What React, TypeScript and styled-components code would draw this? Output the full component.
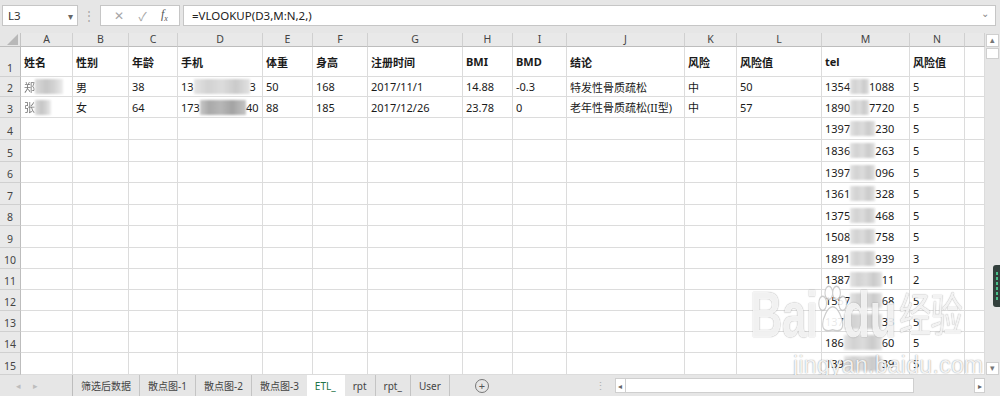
import React from "react";
import styled, { createGlobalStyle } from "styled-components";

const GlobalStyle = createGlobalStyle`
  html, body {
    margin: 0;
    padding: 0;
  }
  body {
    width: 1000px;
    height: 396px;
    overflow: hidden;
    background: #e6e6e6;
    font-family: "Noto Sans", "Noto Sans CJK SC", sans-serif;
    color: #1a1a1a;
  }
`;

const COLS = ["A", "B", "C", "D", "E", "F", "G", "H", "I", "J", "K", "L", "M", "N", ""];
const COL_WIDTHS = [52, 56, 49, 85, 50, 55, 95, 50, 54, 118, 52, 85, 88, 55];
const ROW_HEIGHTS = [30, 20, 21, 22, 22, 21, 22, 21, 22, 21, 21, 21, 21, 21, 22];

const TELS: [string, number, string][] = [
  ["1354", 3, "1088"],
  ["1890", 3, "7720"],
  ["1397", 4, "230"],
  ["1836", 4, "263"],
  ["1397", 4, "096"],
  ["1361", 4, "328"],
  ["1375", 4, "468"],
  ["1508", 4, "758"],
  ["1891", 4, "939"],
  ["1387", 5, "11"],
  ["1557", 5, "68"],
  ["137", 6, "33"],
  ["186", 6, "60"],
  ["139", 6, "39"],
];
const RISK = ["5", "5", "5", "5", "5", "5", "5", "5", "3", "2", "5", "5", "5", "5"];

const TABS = ["筛选后数据", "散点图-1", "散点图-2", "散点图-3", "ETL_", "rpt", "rpt_", "User"];

export default function App() {
  const header = ["姓名", "性别", "年龄", "手机", "体重", "身高", "注册时间", "BMI", "BMD", "结论", "风险", "风险值", "tel", "风险值"];

  const rows: React.ReactNode[][] = [];
  rows.push(header);
  rows.push([
    <>
      <Faded>郑</Faded>
      <Mosaic $w={28} />
    </>,
    "男",
    "38",
    <>
      13
      <Mosaic $w={56} $light />3
    </>,
    "50",
    "168",
    "2017/11/1",
    "14.88",
    "-0.3",
    "特发性骨质疏松",
    "中",
    "50",
  ]);
  rows.push([
    <>
      <Faded>张</Faded>
      <Mosaic $w={16} />
    </>,
    "女",
    "64",
    <>
      173
      <Mosaic $w={46} $dark />
      40
    </>,
    "88",
    "185",
    "2017/12/26",
    "23.78",
    "0",
    "老年性骨质疏松(II型)",
    "中",
    "57",
  ]);
  for (let i = 3; i < 15; i++) rows.push([]);
  TELS.forEach(([pre, hidden, post], i) => {
    const r = rows[i + 1];
    while (r.length < 12) r.push("");
    r[12] = (
      <>
        {pre}
        <Mosaic $w={hidden * 6.3} $light />
        {post}
      </>
    );
    r[13] = RISK[i];
  });

  return (
    <>
      <GlobalStyle />
      <Page>
        <FormulaBar>
          <NameBox>
            <span>L3</span>
            <Caret>▾</Caret>
          </NameBox>
          <Grip>⋮</Grip>
          <ActionBox>
            <Action>✕</Action>
            <Action>✓</Action>
            <Fx>
              f<sub>x</sub>
            </Fx>
          </ActionBox>
          <FormulaInput>
            <span>=VLOOKUP(D3,M:N,2,)</span>
            <Chevron>⌄</Chevron>
          </FormulaInput>
        </FormulaBar>

        <SheetArea>
          <Grid>
            <Corner>
              <svg width="11" height="11" viewBox="0 0 11 11">
                <path d="M11 0 L11 11 L0 11 Z" fill="#b8b8b8" />
              </svg>
            </Corner>
            {COLS.map((c, i) => (
              <ColHead key={i}>{c}</ColHead>
            ))}
            {ROW_HEIGHTS.map((_, r) => (
              <React.Fragment key={r}>
                <RowHead>{r + 1}</RowHead>
                {COLS.map((_, c) => (
                  <Cell key={c} $bold={r === 0}>
                    {rows[r][c] ?? ""}
                  </Cell>
                ))}
              </React.Fragment>
            ))}
          </Grid>
          <VScroll>
            <ScrollBtn>▴</ScrollBtn>
            <VThumb />
            <VTrack />
            <ScrollBtn>▾</ScrollBtn>
          </VScroll>
          <SideWidget>
            <i />
            <i />
            <i />
            <i />
            <i />
            <i />
          </SideWidget>
          <Watermark>
            <WmBig>
              Bai
              <Paw viewBox="0 0 40 44">
                <g fill="#ffffff" stroke="#c8c8c8" strokeWidth="1.4">
                  <ellipse cx="8" cy="16" rx="5" ry="6.5" />
                  <ellipse cx="16" cy="6.5" rx="5" ry="6" />
                  <ellipse cx="26" cy="6.5" rx="5" ry="6" />
                  <ellipse cx="34" cy="16" rx="5" ry="6.5" />
                  <path d="M21 19 C14 19 8 30 8 35 C8 41 14 42 21 40 C28 42 34 41 34 35 C34 30 28 19 21 19 Z" />
                </g>
              </Paw>
              du
              <WmCjk>经验</WmCjk>
            </WmBig>
            <WmUrl>jingyan.baidu.com</WmUrl>
          </Watermark>
        </SheetArea>

        <TabBar>
          <TabNav>
            <NavArrow>◂</NavArrow>
            <NavArrow>▸</NavArrow>
          </TabNav>
          {TABS.map((t) => (
            <Tab key={t} $active={t === "ETL_"}>
              {t}
            </Tab>
          ))}
          <AddSheet>+</AddSheet>
          <TabGrip>⋮</TabGrip>
          <HScroll>
            <HBtn>◂</HBtn>
            <HThumb />
            <HTrack />
            <HBtn>▸</HBtn>
          </HScroll>
        </TabBar>
      </Page>
    </>
  );
}

const Page = styled.div`
  width: 1000px;
  height: 396px;
  display: flex;
  flex-direction: column;
  background: #e6e6e6;
  overflow: hidden;
`;

const FormulaBar = styled.div`
  height: 33px;
  display: flex;
  align-items: flex-start;
  padding: 5px 4px 0 2px;
  box-sizing: border-box;
  flex-shrink: 0;
`;

const BoxBase = styled.div`
  height: 21px;
  box-sizing: border-box;
  background: #ffffff;
  border: 1px solid #c6c6c6;
  display: flex;
  align-items: center;
`;

const NameBox = styled(BoxBase)`
  width: 76px;
  padding: 0 4px 0 5px;
  justify-content: space-between;
  font-size: 11.5px;
  color: #333;
`;

const Caret = styled.span`
  font-size: 10px;
  color: #666;
`;

const Grip = styled.div`
  width: 22px;
  text-align: center;
  font-size: 12px;
  line-height: 21px;
  color: #a8a8a8;
`;

const ActionBox = styled(BoxBase)`
  width: 80px;
  justify-content: space-around;
  padding: 0 4px 0 6px;
`;

const Action = styled.span`
  font-size: 12px;
  color: #a6a6a6;
`;

const Fx = styled.span`
  font-family: "Liberation Serif", serif;
  font-style: italic;
  font-size: 12px;
  color: #555;
  sub {
    font-size: 8px;
  }
`;

const FormulaInput = styled(BoxBase)`
  flex: 1;
  margin-left: 3px;
  padding: 0 6px 0 8px;
  justify-content: space-between;
  font-size: 11.5px;
  color: #222;
`;

const Chevron = styled.span`
  font-size: 10px;
  color: #888;
  margin-top: -5px;
`;

const SheetArea = styled.div`
  position: relative;
  flex: 1;
  display: flex;
  min-height: 0;
  overflow: hidden;
`;

const Grid = styled.div`
  flex: 1;
  display: grid;
  grid-template-columns: 21px ${COL_WIDTHS.map((w) => `${w}px`).join(" ")} 1fr;
  grid-template-rows: 14px ${ROW_HEIGHTS.map((h) => `${h}px`).join(" ")};
  background: #ffffff;
  overflow: hidden;
`;

const Corner = styled.div`
  background: #e6e6e6;
  border-right: 1px solid #c4c4c4;
  border-bottom: 1px solid #bdbdbd;
  box-sizing: border-box;
  display: flex;
  align-items: flex-end;
  justify-content: flex-end;
  padding: 0 2px 1px 0;
`;

const ColHead = styled.div`
  background: #e9e9e9;
  border-right: 1px solid #d0d0d0;
  border-bottom: 1px solid #bdbdbd;
  box-sizing: border-box;
  font-size: 10.5px;
  line-height: 13px;
  text-align: center;
  color: #444;
`;

const RowHead = styled.div`
  background: #e9e9e9;
  border-right: 1px solid #bdbdbd;
  border-bottom: 1px solid #d0d0d0;
  box-sizing: border-box;
  font-size: 10.5px;
  color: #444;
  display: flex;
  align-items: flex-end;
  justify-content: center;
  padding-bottom: 1px;
`;

const Cell = styled.div<{ $bold?: boolean }>`
  border-right: 1px solid #dcdcdc;
  border-bottom: 1px solid #dcdcdc;
  box-sizing: border-box;
  display: flex;
  align-items: center;
  padding-left: 3px;
  white-space: nowrap;
  font-size: 11px;
  font-weight: ${(p) => (p.$bold ? 700 : 400)};
  color: #1a1a1a;
`;

const Faded = styled.span`
  color: #777;
  filter: blur(0.6px);
`;

const Mosaic = styled.span<{ $w: number; $light?: boolean; $dark?: boolean }>`
  display: inline-block;
  width: ${(p) => p.$w}px;
  height: 15px;
  vertical-align: middle;
  background: ${(p) =>
    p.$dark
      ? "linear-gradient(90deg, #c8c8c8 0%, #a9a9a9 20%, #b7b7b7 45%, #a3a3a3 70%, #c4c4c4 100%)"
      : p.$light
        ? "linear-gradient(90deg, #e4e4e4 0%, #d2d2d2 25%, #dcdcdc 50%, #cacaca 75%, #e2e2e2 100%)"
        : "linear-gradient(90deg, #dadada 0%, #c6c6c6 40%, #d4d4d4 70%, #ececec 100%)"};
  filter: blur(1px);
`;

const VScroll = styled.div`
  width: 15px;
  display: flex;
  flex-direction: column;
  align-items: center;
  background: #e6e6e6;
  padding-top: 1px;
  box-sizing: border-box;
`;

const ScrollBtn = styled.div`
  width: 13px;
  height: 13px;
  box-sizing: border-box;
  background: #ffffff;
  border: 1px solid #cfcfcf;
  font-size: 9px;
  line-height: 10px;
  text-align: center;
  color: #777;
`;

const VThumb = styled.div`
  width: 13px;
  height: 11px;
  margin-top: 1px;
  box-sizing: border-box;
  background: #ffffff;
  border: 1px solid #cfcfcf;
`;

const VTrack = styled.div`
  flex: 1;
`;

const SideWidget = styled.div`
  position: absolute;
  right: 0;
  top: 232px;
  width: 7px;
  height: 42px;
  box-sizing: border-box;
  background: #33403d;
  border-radius: 3px 0 0 3px;
  display: flex;
  flex-direction: column;
  align-items: flex-start;
  justify-content: center;
  gap: 2px;
  padding-left: 3px;
  i {
    display: block;
    width: 2px;
    height: 3px;
    background: #49c28a;
  }
`;

const Watermark = styled.div`
  position: absolute;
  left: 750px;
  top: 250px;
  pointer-events: none;
  color: rgba(255, 255, 255, 0.88);
  text-shadow: 0 0 1px rgba(0, 0, 0, 0.35), 0 0 2px rgba(0, 0, 0, 0.15);
  font-family: "Liberation Sans", "Noto Sans CJK SC", sans-serif;
`;

const WmBig = styled.div`
  display: flex;
  align-items: center;
  font-size: 64px;
  font-weight: 700;
  line-height: 64px;
  letter-spacing: -1px;
  transform: scaleX(0.7);
  transform-origin: left center;
  white-space: nowrap;
`;

const Paw = styled.svg`
  width: 44px;
  height: 50px;
  margin: -10px -6px 0 -2px;
  opacity: 0.9;
`;

const WmCjk = styled.span`
  font-size: 46px;
  font-weight: 400;
  margin-left: 4px;
`;

const WmUrl = styled.div`
  font-size: 23px;
  line-height: 26px;
  margin: 5px 0 0 43px;
  letter-spacing: 0.3px;
  white-space: nowrap;
`;

const TabBar = styled.div`
  height: 21px;
  flex-shrink: 0;
  display: flex;
  align-items: stretch;
  background: #e6e6e6;
  font-size: 10px;
  color: #444;
`;

const TabNav = styled.div`
  width: 73px;
  display: flex;
  align-items: center;
  gap: 12px;
  padding-left: 16px;
  box-sizing: border-box;
  border-right: 1px solid #bdbdbd;
`;

const NavArrow = styled.span`
  font-size: 9px;
  color: #bdbdbd;
`;

const Tab = styled.div<{ $active?: boolean }>`
  display: flex;
  align-items: center;
  padding: 0 8px;
  border-right: 1px solid ${(p) => (p.$active ? "transparent" : "#c4c4c4")};
  background: ${(p) => (p.$active ? "#ffffff" : "transparent")};
  color: ${(p) => (p.$active ? "#217346" : "#444")};
  margin-left: ${(p) => (p.$active ? "-1px" : "0")};
`;

const AddSheet = styled.div`
  width: 12px;
  height: 12px;
  margin: 4px 0 0 25px;
  border: 1px solid #777;
  border-radius: 50%;
  font-size: 11px;
  line-height: 11px;
  text-align: center;
  color: #555;
`;

const TabGrip = styled.div`
  margin-left: 106px;
  line-height: 21px;
  font-size: 11px;
  color: #b0b0b0;
`;

const HScroll = styled.div`
  flex: 1;
  display: flex;
  align-items: center;
  margin: 2px 15px 2px 9px;
`;

const HBtn = styled.div`
  width: 11px;
  height: 15px;
  box-sizing: border-box;
  background: #ffffff;
  border: 1px solid #cfcfcf;
  font-size: 8px;
  line-height: 13px;
  text-align: center;
  color: #666;
`;

const HThumb = styled.div`
  width: 288px;
  height: 15px;
  box-sizing: border-box;
  background: #ffffff;
  border: 1px solid #cfcfcf;
  border-left: none;
`;

const HTrack = styled.div`
  flex: 1;
`;
